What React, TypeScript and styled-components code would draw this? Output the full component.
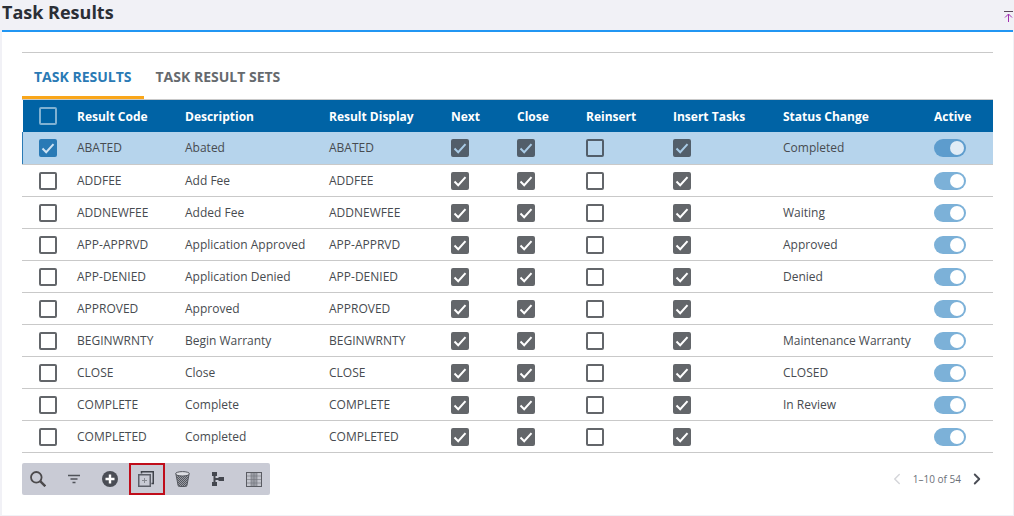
import React from 'react'
import styled, { createGlobalStyle } from 'styled-components'
import { ChevronLeft, ChevronRight } from 'lucide-react'

const GlobalStyle = createGlobalStyle`
  html, body {
    margin: 0;
    padding: 0;
    height: 516px;
    overflow: hidden;
    background: #f1f1f6;
    font-family: "Open Sans", "Liberation Sans", sans-serif;
  }
`

const columns = '54px 108px 144px 122px 66px 69px 87px 110px 151px 59px'

const Page = styled.div`
  width: 1014px;
  height: 516px;
  display: flex;
  flex-direction: column;
`

const TitleBar = styled.header`
  height: 30px;
  flex-shrink: 0;
  display: flex;
  align-items: flex-start;
  justify-content: space-between;
  padding: 0 1px 0 2px;
`

const Title = styled.h1`
  margin: 0;
  font-size: 18px;
  line-height: 25px;
  font-weight: 700;
  color: #2b2f36;
`

const PinButton = styled.span`
  display: flex;
  margin-top: 11px;
`

const Panel = styled.main`
  margin: 0 1px 0 2px;
  padding: 20px 20px 0;
  background: #fff;
  border-top: 2px solid #2196f3;
  box-sizing: content-box;
  height: 463px;
`

const Divider = styled.hr`
  margin: 0;
  border: 0;
  border-top: 1px solid #c9c9c9;
`

const Tabs = styled.nav`
  display: flex;
  height: 46px;
`

const Tab = styled.div<{ $active?: boolean }>`
  padding: 14px 12px 0;
  font-size: 14px;
  line-height: 20px;
  font-weight: 700;
  color: ${(p) => (p.$active ? '#2a7ab5' : '#666a6e')};
  border-bottom: 3px solid ${(p) => (p.$active ? '#f9a61a' : 'transparent')};
  box-sizing: border-box;
`

const Table = styled.div`
  border-top: 1px solid #c9c9c9;
`

const HeaderRow = styled.div`
  display: grid;
  grid-template-columns: ${columns};
  height: 32px;
  margin-left: 1px;
  align-items: center;
  background: #0063a5;
`

const HeaderCell = styled.div`
  font-size: 12px;
  line-height: 16px;
  margin-top: 2px;
  font-weight: 700;
  color: #fff;
  white-space: nowrap;
`

const Row = styled.div<{ $selected?: boolean }>`
  display: grid;
  grid-template-columns: ${columns};
  height: ${(p) => (p.$selected ? '33px' : '32px')};
  box-sizing: border-box;
  align-items: center;
  padding-left: 1px;
  border-bottom: 1px solid #c9c9c9;
  background: ${(p) => (p.$selected ? '#b6d4ec' : '#fff')};
  box-shadow: ${(p) => (p.$selected ? 'inset 1px 0 0 #2a7ab5' : 'none')};
`

const Cell = styled.div`
  font-size: 12px;
  color: #474b50;
  white-space: nowrap;
  display: flex;
  align-items: center;
`

const TextCell = styled(Cell)<{ $raised?: boolean }>`
  margin-bottom: ${(p) => (p.$raised ? '2px' : '0')};
`

const SelectCell = styled(Cell)`
  padding-left: 16px;
`

const Box = styled.span<{ $tone: 'header' | 'blue' | 'gray' | 'grayDim' | 'empty' | 'emptyDim' }>`
  width: 18px;
  height: 18px;
  box-sizing: border-box;
  border-radius: 2px;
  display: flex;
  align-items: center;
  justify-content: center;
  border: 2px solid
    ${(p) =>
      p.$tone === 'header'
        ? '#7fb1d2'
        : p.$tone === 'blue'
          ? '#2a7ab5'
          : p.$tone === 'grayDim' || p.$tone === 'emptyDim'
            ? '#525e6a'
            : '#63666a'};
  background: ${(p) =>
    p.$tone === 'blue' ? '#2a7ab5' : p.$tone === 'gray' ? '#63666a' : p.$tone === 'grayDim' ? '#525e6a' : 'transparent'};
`

const Toggle = styled.span<{ $selected?: boolean }>`
  width: 32px;
  height: 18px;
  border-radius: 9px;
  background: ${(p) => (p.$selected ? '#5d9ccd' : '#7cb1d8')};
  display: flex;
  align-items: center;
  justify-content: flex-end;
  padding-right: 2px;
  box-sizing: border-box;
`

const Knob = styled.span<{ $selected?: boolean }>`
  width: 14px;
  height: 14px;
  border-radius: 50%;
  background: ${(p) => (p.$selected ? '#e1ecf6' : '#fff')};
`

const Footer = styled.footer`
  display: flex;
  align-items: center;
  justify-content: space-between;
  margin-top: 10px;
`

const Toolbar = styled.div`
  display: flex;
  gap: 4px;
  height: 32px;
  background: #c9cbd5;
  border-radius: 2px;
`

const ToolButton = styled.button<{ $highlighted?: boolean }>`
  width: 32px;
  height: 32px;
  padding: 0;
  border: 0;
  background: none;
  display: flex;
  align-items: center;
  justify-content: center;
  box-sizing: border-box;
  ${(p) =>
    p.$highlighted &&
    `
    width: 36px;
    margin: 0 -3px 0 -1px;
    padding-right: 2px;
    border: 2px solid #c00d1a;
  `}
`

const Pager = styled.div`
  display: flex;
  align-items: center;
  margin-right: 7px;
`

const PagerText = styled.span`
  font-size: 10px;
  color: #6b7078;
  margin: 0 7px;
`

const headers = [
  'Result Code',
  'Description',
  'Result Display',
  'Next',
  'Close',
  'Reinsert',
  'Insert Tasks',
  'Status Change',
  'Active',
]

const rows = [
  ['ABATED', 'Abated', 'ABATED', 'Completed'],
  ['ADDFEE', 'Add Fee', 'ADDFEE', ''],
  ['ADDNEWFEE', 'Added Fee', 'ADDNEWFEE', 'Waiting'],
  ['APP-APPRVD', 'Application Approved', 'APP-APPRVD', 'Approved'],
  ['APP-DENIED', 'Application Denied', 'APP-DENIED', 'Denied'],
  ['APPROVED', 'Approved', 'APPROVED', ''],
  ['BEGINWRNTY', 'Begin Warranty', 'BEGINWRNTY', 'Maintenance Warranty'],
  ['CLOSE', 'Close', 'CLOSE', 'CLOSED'],
  ['COMPLETE', 'Complete', 'COMPLETE', 'In Review'],
  ['COMPLETED', 'Completed', 'COMPLETED', ''],
]

function Tick({ color }: { color: string }) {
  return (
    <svg width="14" height="14" viewBox="0 0 14 14" fill="none">
      <path d="M1.500 7.500 5.200 11.200 12.500 3.200" stroke={color} strokeWidth="2" />
    </svg>
  )
}

function PinIcon() {
  return (
    <svg width="9" height="11" viewBox="0 0 9 11" fill="none">
      <path d="M0 .5h9" stroke="#5a4a5c" />
      <path d="M4.500 11V3M1 6.500l3.500-3.500L8 6.500" stroke="#a030b0" />
    </svg>
  )
}

function SearchIcon() {
  return (
    <svg width="16" height="16" viewBox="0 0 16 16" fill="none">
      <circle cx="6.300" cy="6.300" r="5.300" stroke="#4c4a4c" strokeWidth="1.800" />
      <path d="M10.200 10.200 15.300 15.300" stroke="#4c4a4c" strokeWidth="2.400" />
    </svg>
  )
}

function FilterIcon() {
  return (
    <svg width="14" height="12" viewBox="0 0 14 12" fill="none" stroke="#50535a" strokeWidth="1.500">
      <path d="M1 2.500h12M3.500 6h7M5.500 9.500h3" />
    </svg>
  )
}

function AddIcon() {
  return (
    <svg width="16" height="16" viewBox="0 0 16 16">
      <circle cx="8" cy="8" r="8" fill="#4a4d55" />
      <path d="M8 3.500v9M3.500 8h9" stroke="#fff" strokeWidth="2.400" />
    </svg>
  )
}

function CopyIcon() {
  return (
    <svg width="16" height="16" viewBox="0 0 16 16" fill="none">
      <path d="M3.500 2.500V.75h11.750V12.500H13.500" stroke="#3f424a" strokeWidth="1.500" />
      <rect x=".75" y="3.750" width="11.500" height="11.500" stroke="#5c5f68" strokeWidth="1.500" />
      <path d="M6.500 7v5M4 9.500h5" stroke="#85888f" />
    </svg>
  )
}

function TrashIcon() {
  return (
    <svg width="15" height="16" viewBox="0 0 15 16" fill="none">
      <defs>
        <pattern id="mesh" width="2" height="2" patternUnits="userSpaceOnUse">
          <rect width="2" height="2" fill="#9a9ca4" />
          <rect width="1" height="1" fill="#55585f" />
          <rect x="1" y="1" width="1" height="1" fill="#55585f" />
        </pattern>
      </defs>
      <path d="M1 3.500 3 14a1.500 1.500 0 0 0 1.500 1.500h6A1.500 1.500 0 0 0 12 14l2-10.500z" fill="url(#mesh)" stroke="#55585f" />
      <ellipse cx="7.500" cy="2.800" rx="7" ry="2.200" fill="#dcdde2" stroke="#55585f" />
    </svg>
  )
}

function TreeIcon() {
  return (
    <svg width="12" height="14" viewBox="0 0 12 14" fill="#44474f">
      <rect x="0" y="0" width="5" height="4" />
      <rect x="0" y="10" width="5" height="4" />
      <rect x="6.500" y="5" width="5.500" height="4" />
      <path d="M1.500 4h2v2h4v2h-4v2h-2z" />
    </svg>
  )
}

function GridIcon() {
  return (
    <svg width="16" height="15" viewBox="0 0 16 15" fill="none">
      <rect x=".5" y=".5" width="15" height="14" fill="#c3c5cd" stroke="#5a5c63" />
      <rect x="5" y="1" width="6" height="13" fill="#9b9da5" />
      <path d="M1 4h14M1 7.500h14M1 11h14M5 1v13M8 1v13M11 1v13" stroke="#74767d" strokeWidth=".6" />
    </svg>
  )
}

export default function App() {
  return (
    <Page>
      <GlobalStyle />
      <TitleBar>
        <Title>Task Results</Title>
        <PinButton>
          <PinIcon />
        </PinButton>
      </TitleBar>
      <Panel>
        <Divider />
        <Tabs>
          <Tab $active>TASK RESULTS</Tab>
          <Tab>TASK RESULT SETS</Tab>
        </Tabs>
        <Table>
          <HeaderRow>
            <SelectCell>
              <Box $tone="header" />
            </SelectCell>
            {headers.map((h) => (
              <HeaderCell key={h}>{h}</HeaderCell>
            ))}
          </HeaderRow>
          {rows.map(([code, description, display, status], i) => {
            const selected = i === 0
            const tick = selected ? '#a9cbe6' : '#fff'
            return (
              <Row key={code} $selected={selected}>
                <SelectCell>
                  <Box $tone={selected ? 'blue' : 'empty'}>{selected && <Tick color="#cfe3f3" />}</Box>
                </SelectCell>
                <TextCell $raised={selected}>{code}</TextCell>
                <TextCell $raised={selected}>{description}</TextCell>
                <TextCell $raised={selected}>{display}</TextCell>
                <Cell>
                  <Box $tone={selected ? 'grayDim' : 'gray'}>
                    <Tick color={tick} />
                  </Box>
                </Cell>
                <Cell>
                  <Box $tone={selected ? 'grayDim' : 'gray'}>
                    <Tick color={tick} />
                  </Box>
                </Cell>
                <Cell>
                  <Box $tone={selected ? 'emptyDim' : 'empty'} />
                </Cell>
                <Cell>
                  <Box $tone={selected ? 'grayDim' : 'gray'}>
                    <Tick color={tick} />
                  </Box>
                </Cell>
                <TextCell $raised={selected}>{status}</TextCell>
                <Cell>
                  <Toggle $selected={selected}>
                    <Knob $selected={selected} />
                  </Toggle>
                </Cell>
              </Row>
            )
          })}
        </Table>
        <Footer>
          <Toolbar>
            <ToolButton>
              <SearchIcon />
            </ToolButton>
            <ToolButton>
              <FilterIcon />
            </ToolButton>
            <ToolButton>
              <AddIcon />
            </ToolButton>
            <ToolButton $highlighted>
              <CopyIcon />
            </ToolButton>
            <ToolButton>
              <TrashIcon />
            </ToolButton>
            <ToolButton>
              <TreeIcon />
            </ToolButton>
            <ToolButton>
              <GridIcon />
            </ToolButton>
          </Toolbar>
          <Pager>
            <ChevronLeft size={18} color="#d5d6da" strokeWidth={2} />
            <PagerText>1–10 of 54</PagerText>
            <ChevronRight size={18} color="#4a4d55" strokeWidth={2.5} />
          </Pager>
        </Footer>
      </Panel>
    </Page>
  )
}
